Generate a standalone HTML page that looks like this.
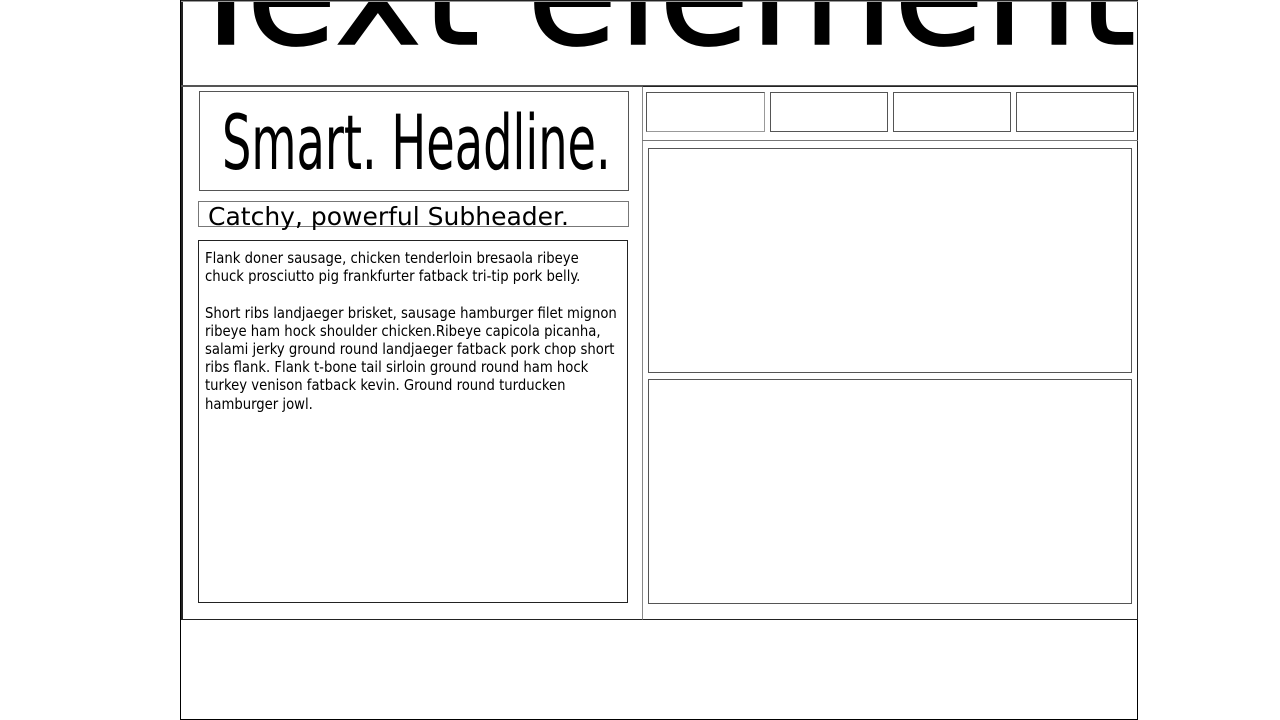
<!DOCTYPE html>
<html><head><meta charset="utf-8"><style>
body{margin:0;width:1280px;height:720px;background:#fff;overflow:hidden;position:relative;font-family:"DejaVu Sans","Liberation Sans",sans-serif}
div{position:absolute;box-sizing:border-box}
.c{font-family:"DejaVu Sans Condensed","DejaVu Sans",sans-serif;font-stretch:condensed}
</style></head><body>
<div style="left:180px;top:0;width:958px;height:720px;border:1px solid #000"></div>
<div style="left:181px;top:0;width:957px;height:620px;border:1px solid #222;border-left-width:2px"></div>
<div style="left:181px;top:1px;width:957px;height:86px;border-bottom:1px solid #888;border-top:1px solid #999;overflow:hidden">
 <div style="left:0px;top:-84px;font-size:150px;line-height:1;white-space:nowrap;color:#000;font-family:'DejaVu Sans',sans-serif;transform:scaleX(0.985);transform-origin:left;-webkit-text-stroke:1.5px #000">Text element</div>
</div>
<div style="left:181px;top:85px;width:957px;height:2px;background:#555"></div>
<div style="left:199px;top:91px;width:430px;height:100px;border:1px solid #555"></div>
<div class="c" style="left:222px;top:95px;font-size:76px;line-height:96px;white-space:nowrap;transform:scaleX(0.677);transform-origin:left">Smart. Headline.</div>
<div style="left:198px;top:201px;width:431px;height:26px;border:1px solid #777"></div>
<div style="left:208px;top:200px;font-size:25px;line-height:34px;white-space:nowrap">Catchy, powerful Subheader.</div>
<div style="left:198px;top:240px;width:430px;height:363px;border:1px solid #222"></div>
<div class="c" style="left:205px;top:250px;font-size:14.7px;line-height:18.2px;white-space:nowrap">Flank doner sausage, chicken tenderloin bresaola ribeye<br>chuck prosciutto pig frankfurter fatback tri-tip pork belly.<br><br>Short ribs landjaeger brisket, sausage hamburger filet mignon<br>ribeye ham hock shoulder chicken.Ribeye capicola picanha,<br>salami jerky ground round landjaeger fatback pork chop short<br>ribs flank. Flank t-bone tail sirloin ground round ham hock<br>turkey venison fatback kevin. Ground round turducken<br>hamburger jowl.</div>
<div style="left:642px;top:86px;width:496px;height:534px;border:1px solid #222;border-left-color:#888"></div>
<div style="left:642px;top:140px;width:496px;height:1px;background:#777"></div>
<div style="left:646px;top:92px;width:119px;height:40px;border:1px solid #555;border-bottom-color:#999;border-right-color:#999"></div>
<div style="left:770px;top:92px;width:118px;height:40px;border:1px solid #555"></div>
<div style="left:893px;top:92px;width:118px;height:40px;border:1px solid #555"></div>
<div style="left:1016px;top:92px;width:118px;height:40px;border:1px solid #555"></div>
<div style="left:648px;top:148px;width:484px;height:225px;border:1px solid #555"></div>
<div style="left:648px;top:379px;width:484px;height:225px;border:1px solid #555"></div>
</body></html>
